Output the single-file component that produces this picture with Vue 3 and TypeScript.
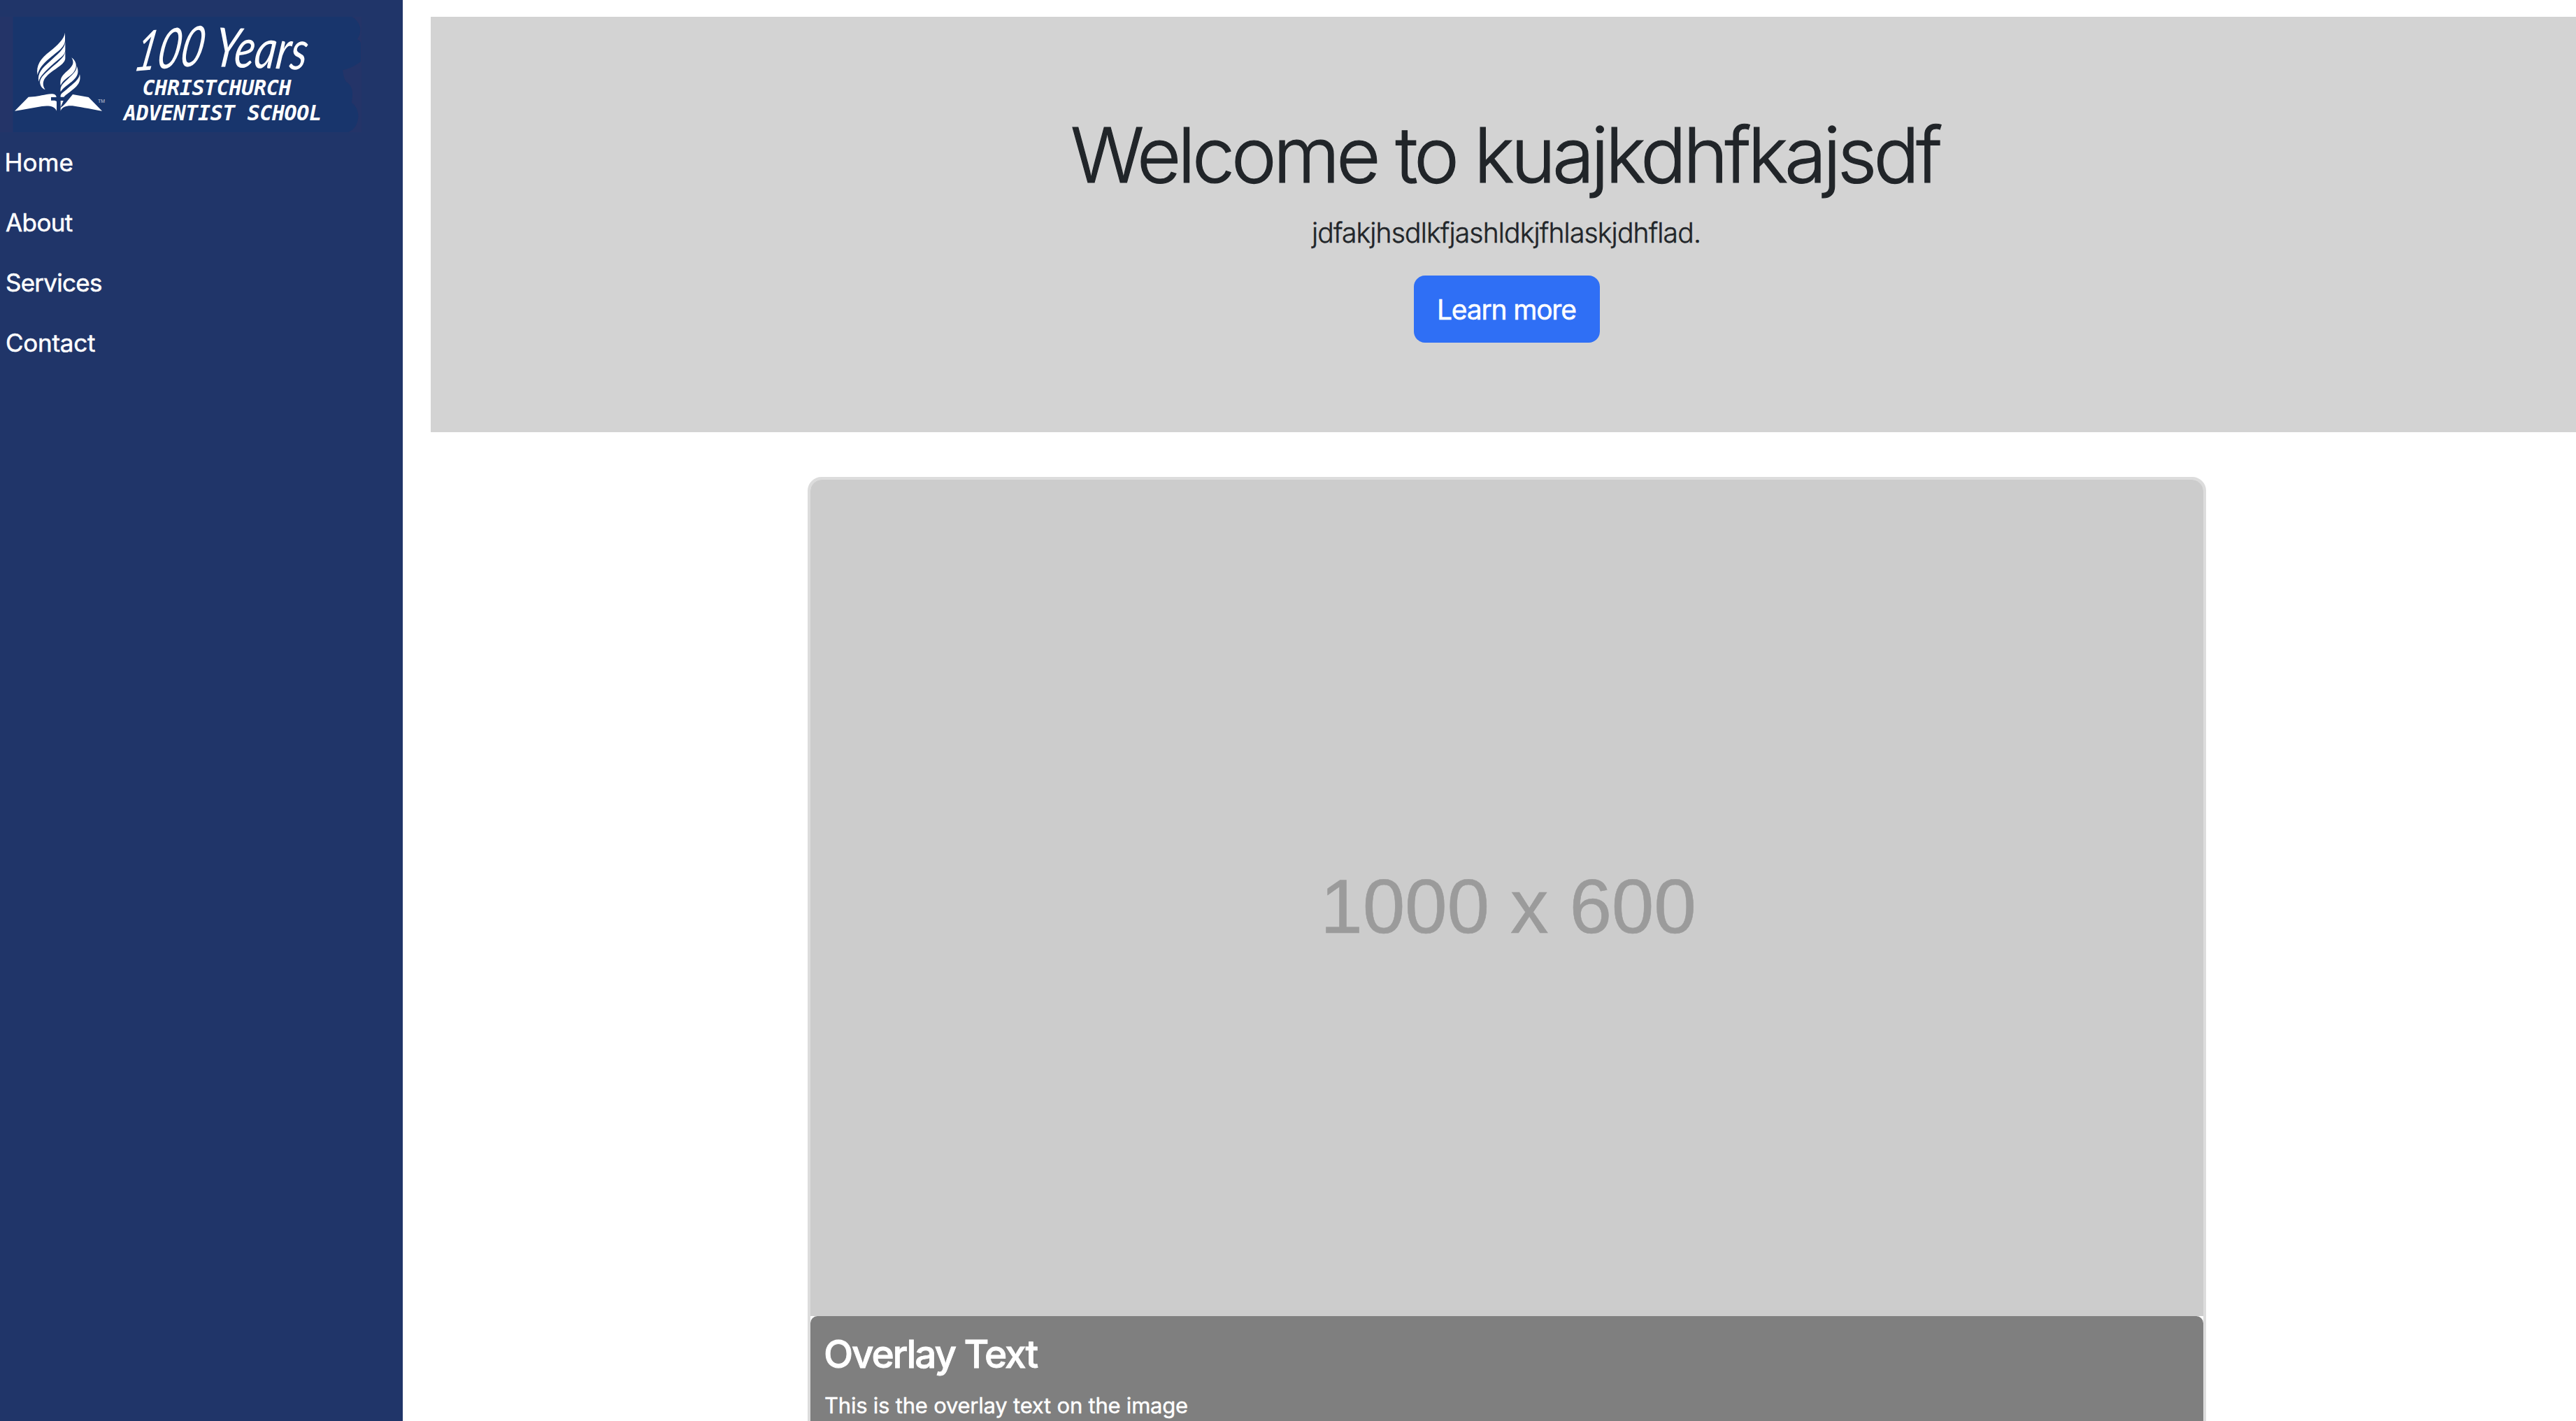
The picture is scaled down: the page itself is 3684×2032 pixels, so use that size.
<script setup lang="ts">
interface NavItem {
  label: string
  spacing: string
}

const navItems: NavItem[] = [
  { label: 'Home', spacing: '0.1px' },
  { label: 'About', spacing: '-0.6px' },
  { label: 'Services', spacing: '-0.75px' },
  { label: 'Contact', spacing: '-0.25px' },
]
</script>

<template>
  <div class="page">
    <aside class="sidebar">
      <svg class="logo" width="520" height="165" viewBox="0 24 520 165" role="img" aria-label="100 Years Christchurch Adventist School">
        <rect x="0" y="24" width="517" height="165" fill="#243468" />
        <path
          d="M18.500 24H503C509 27 514 33 515 40C516 47 513 53 511 56C514 58 516 60 516 62V88C509 93 500 99 490 100C491 107 492 113 495 117C501 120 504 127 504 134C504 140 503 144 503 147C509 151 512 158 512.500 166C512 178 506 186 498 189H18.500Z"
          fill="#18356c"
        />
        <g transform="translate(0 20) scale(0.33333)" fill="#fff">
          <path d="M279 80C276 106 245 136 215 160C172 193 154 222 161 262C167 236 183 215 213 190C248 160 281 142 279 109Z" />
          <path d="M280 121C277 151 244 175 214 203C182 231 159 254 166 290C172 265 194 246 224 218C254 190 283 178 280 150Z" />
          <path d="M280 161C277 188 242 210 214 236C188 260 165 278 173 303C177 315 185 322 194 325C180 304 183 284 201 266C231 236 283 216 280 187Z" />
          <path d="M307 187C319 207 315 222 291 242C266 263 256 276 260 307C268 287 287 276 304 262C334 238 333 206 307 187Z" />
          <path d="M329 223C331 244 311 260 291 279C268 301 257 309 260 334C269 318 289 305 308 290C337 267 339 246 329 223Z" />
          <path d="M342 258C340 282 311 301 291 319C270 338 258 342 260 356H274C284 345 302 334 319 319C341 300 347 281 342 258Z" />
          <path d="M63 416L122 356C150 356 170 350 200 345C220 341 241 340 242 357H219V371H235L243 375V416C235 394 206 392 180 396C140 402 100 411 63 416Z" />
          <path d="M260 372H272L260 400Z" />
          <path d="M312 345L380 357L438 416C400 410 355 400 320 395C291 391 267 396 260 416V402C276 392 294 367 312 345Z" />
        </g>
        <g fill="#fff">
          <text class="tm" x="140" y="147">TM</text>
          <g transform="translate(189 102) rotate(-5) skewX(-16)">
            <text class="script" textLength="99" lengthAdjust="spacingAndGlyphs" x="0" y="0">100</text>
          </g>
          <g transform="translate(304 95) rotate(2) skewX(-6)">
            <text class="script" textLength="133" lengthAdjust="spacingAndGlyphs" x="0" y="0">Years</text>
          </g>
          <text class="school" x="203.500" y="136" textLength="213">CHRISTCHURCH</text>
          <text class="school" x="177" y="171.500" textLength="283">ADVENTIST SCHOOL</text>
        </g>
      </svg>
      <nav class="nav">
        <a v-for="item in navItems" :key="item.label" class="nav-link" :style="{ letterSpacing: item.spacing }">{{ item.label }}</a>
      </nav>
    </aside>

    <main class="main">
      <section class="hero">
        <h1 class="title">Welcome to kuajkdhfkajsdf</h1>
        <p class="lead">jdfakjhsdlkfjashldkjfhlaskjdhflad.</p>
        <button class="button" type="button">Learn more</button>
      </section>

      <article class="card">
        <div class="placeholder">1000 x 600</div>
        <div class="overlay">
          <h3 class="overlay-title">Overlay Text</h3>
          <p class="overlay-text">This is the overlay text on the image</p>
        </div>
      </article>
    </main>
  </div>
</template>

<style>
body {
  margin: 0;
  overflow: hidden;
}
</style>

<style scoped>
.page {
  display: flex;
  width: 100vw;
  height: 100vh;
  overflow: hidden;
  background: #fff;
  color: #212529;
  font-family: Inter, 'Liberation Sans', sans-serif;
}

h1,
h3,
p {
  margin: 0;
}

.sidebar {
  flex: 0 0 576px;
  box-sizing: border-box;
  padding-top: 24px;
  background: #203569;
}

.logo {
  display: block;
  overflow: visible;
}

.tm {
  font: 7px 'Liberation Sans', sans-serif;
  opacity: 0.7;
}

.script {
  font: italic 400 78px Lato, sans-serif;
}

.school {
  font: italic 700 30px 'DejaVu Sans Mono', monospace;
}

.nav {
  display: flex;
  flex-direction: column;
}

.nav-link {
  height: 86px;
  padding-left: 8px;
  color: #fff;
  font-size: 35px;
  line-height: 86px;
  -webkit-text-stroke: 0.5px currentColor;
}

.nav-link:first-child {
  padding-left: 6.5px;
}

.main {
  flex: 1;
  min-width: 0;
  padding: 24px 0 0 40px;
  overflow: hidden;
}

.hero {
  display: flex;
  flex-direction: column;
  align-items: center;
  box-sizing: border-box;
  width: 3078px;
  height: 594px;
  padding-top: 130px;
  background: #d3d3d3;
}

.title {
  margin-right: 6px;
  font-size: 109px;
  font-weight: 300;
  letter-spacing: -4.79px;
  line-height: 134px;
  white-space: nowrap;
  -webkit-text-stroke: 1.2px currentColor;
}

.lead {
  margin-top: 15px;
  margin-right: 2px;
  font-size: 39px;
  font-weight: 300;
  letter-spacing: -0.82px;
  line-height: 60px;
  -webkit-text-stroke: 0.5px currentColor;
}

.button {
  width: 266px;
  height: 96px;
  margin-top: 31px;
  padding: 1px 0 0 33px;
  border: 0;
  border-radius: 16px;
  background: #2f6ff5;
  color: #fff;
  font: 400 39px Inter, sans-serif;
  letter-spacing: -1.2px;
  text-align: left;
  white-space: nowrap;
  -webkit-text-stroke: 0.5px currentColor;
}

.card {
  box-sizing: border-box;
  width: 2000px;
  height: 1500px;
  margin: 64px 0 0 539px;
  overflow: hidden;
  border: 4px solid #dcdcdc;
  border-radius: 20px;
}

.placeholder {
  display: flex;
  align-items: center;
  justify-content: center;
  box-sizing: border-box;
  height: 1196px;
  padding: 23px 0 0 4px;
  background: #ccc;
  color: #9b9b9b;
  font: 109px 'Liberation Sans', sans-serif;
  letter-spacing: -0.2px;
  -webkit-text-stroke: 0.6px currentColor;
}

.overlay {
  height: 300px;
  padding: 20px;
  border-radius: 10px;
  background: #7f7f7f;
  color: #fff;
}

.overlay-title {
  font-size: 55px;
  font-weight: 500;
  letter-spacing: -2.14px;
  line-height: 69px;
  text-indent: -1px;
  -webkit-text-stroke: 0.8px currentColor;
}

.overlay-text {
  margin-top: 15px;
  font-size: 31px;
  letter-spacing: -0.22px;
  line-height: 48px;
  -webkit-text-stroke: 0.4px currentColor;
}
</style>
